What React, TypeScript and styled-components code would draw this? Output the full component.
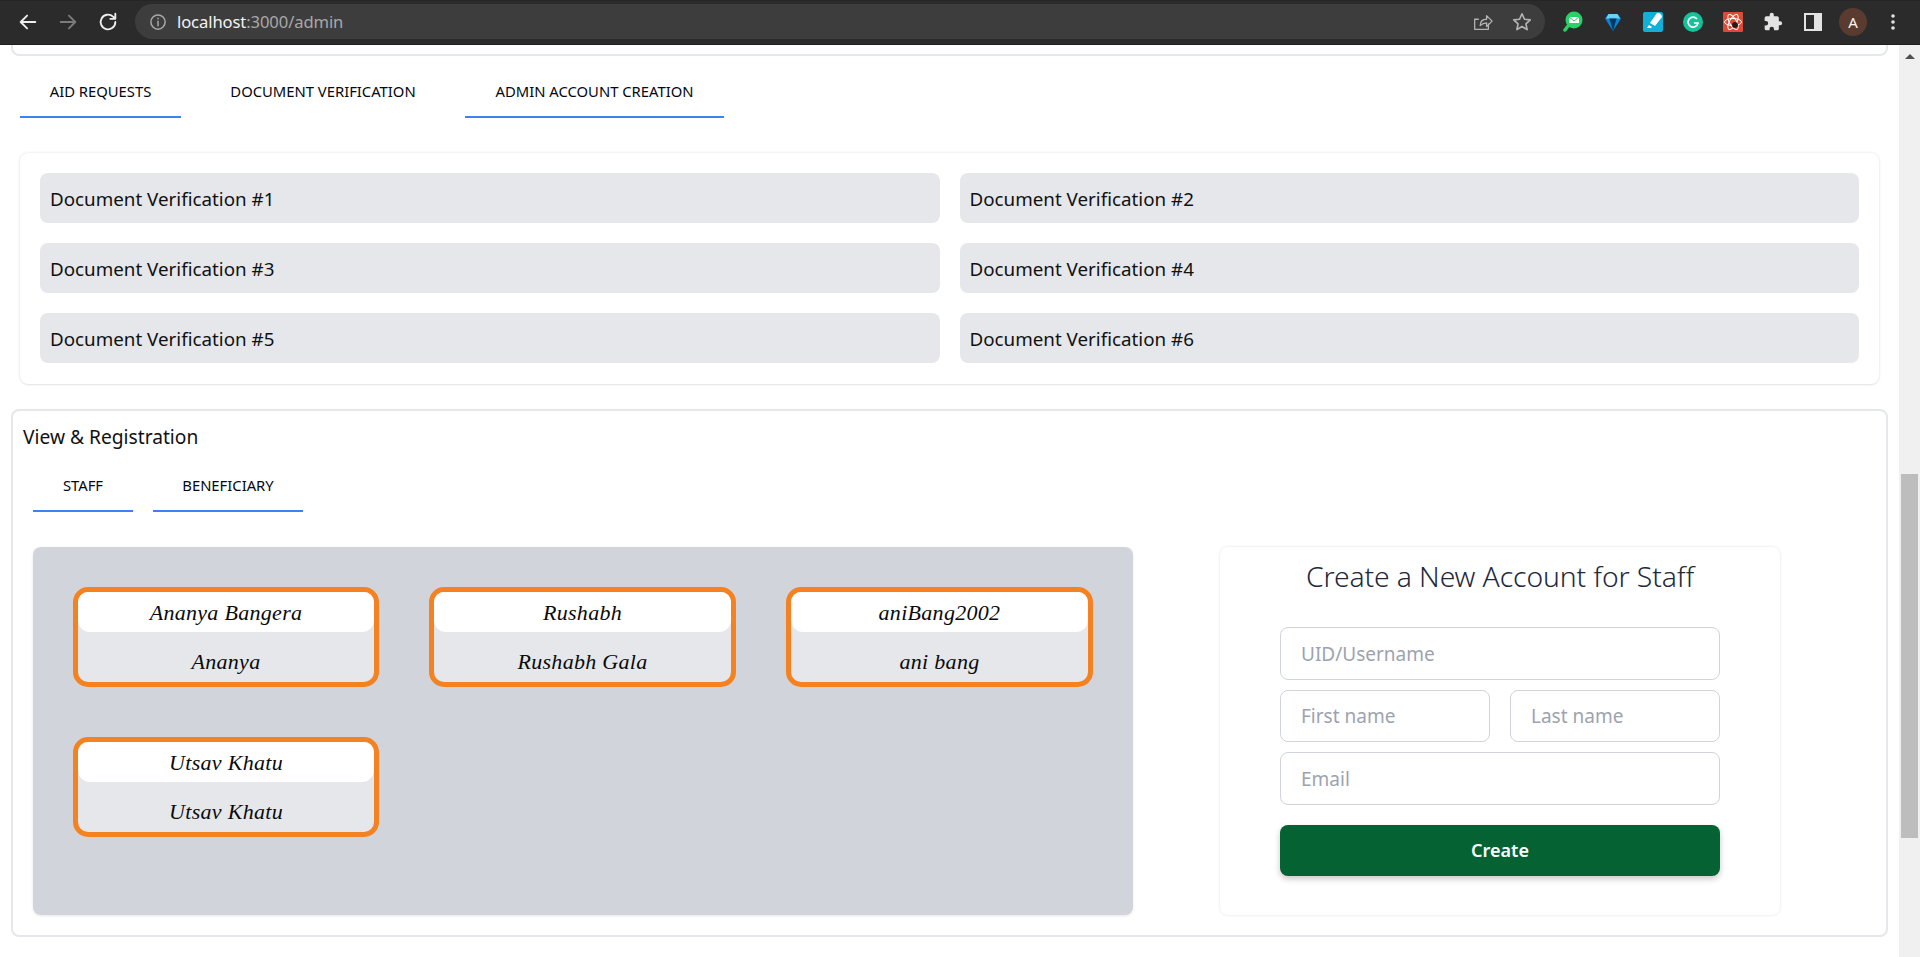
import React from "react";
import styled, { createGlobalStyle } from "styled-components";

const Global = createGlobalStyle`
  html, body { margin: 0; padding: 0; height: 100%; overflow: hidden; background: #fff; }
  * { box-sizing: border-box; }
  body { font-family: "Noto Sans", "Open Sans", sans-serif; color: #111827; }
`;

const Shell = styled.div`
  width: 1920px; height: 957px; display: flex; flex-direction: column; overflow: hidden;
`;
const Toolbar = styled.header`
  height: 45px; flex: none; background: #2b2b2b; border-bottom: 1px solid #1f1f1f;
  display: flex; align-items: center; padding: 0 0 2px 16px; border-top: 1px solid #252525;
`;
const NavButton = styled.span<{ $dim?: boolean }>`
  width: 24px; height: 24px; margin-right: 16px; display: flex; align-items: center; justify-content: center;
  color: ${(p) => (p.$dim ? "#7b7b7b" : "#eeeeee")};
`;
const Omnibox = styled.div`
  width: 1410px; height: 35px; margin: 0 0 0 -1px; background: #3d3d3d; border-radius: 18px; display: flex; align-items: center;
  padding: 0 12px 0 14px; color: #a8a8a8; flex: none;
`;
const UrlText = styled.span`
  font-family: "Noto Sans", sans-serif; font-size: 16.6px; margin-left: 10px; color: #a9a9a9; flex: 1; letter-spacing: -0.1px;
  b { font-weight: 400; color: #f2f2f2; }
`;
const OmniIcon = styled.span`
  width: 22px; height: 22px; margin-left: 18px; display: flex; align-items: center; justify-content: center; color: #b4b4b4;
`;
const ExtRow = styled.div`
  display: flex; align-items: center; margin-left: 8px;
`;
const ExtIcon = styled.span`
  width: 40px; height: 28px; display: flex; align-items: center; justify-content: center;
`;
const Avatar = styled.span`
  width: 28px; height: 28px; border-radius: 50%; background: #5a3b30; color: #f5f5f5; font-size: 15px;
  display: flex; align-items: center; justify-content: center;
`;
const Body = styled.div`
  flex: 1; display: flex; min-height: 0;
`;
const Page = styled.main`
  flex: 1; min-width: 0; padding: 0 11px 0 11px; background: #fff;
`;
const Scrollbar = styled.aside`
  width: 21px; flex: none; background: #f0f0f0; display: flex; flex-direction: column; align-items: center; padding-top: 9px;
`;
const ScrollArrow = styled.span`
  width: 0; height: 0; border-left: 5px solid transparent; border-right: 5px solid transparent; border-bottom: 5px solid #505050;
`;
const ScrollThumb = styled.span`
  width: 17px; height: 364px; background: #bdbdbd; margin-top: 415px;
`;
const TopCardEnd = styled.div`
  height: 11px; border: 2px solid #e5e7eb; border-top: none; border-radius: 0 0 8px 8px;
`;
const Tabs = styled.nav<{ $small?: boolean }>`
  display: flex; gap: ${(p) => (p.$small ? "20px" : "0")};
  margin: ${(p) => (p.$small ? "12px 0 0 10px" : "0 0 0 9px")};
  padding-top: ${(p) => (p.$small ? "0" : "11px")};
`;
const Tab = styled.div<{ $w: number; $on?: boolean; $small?: boolean }>`
  width: ${(p) => p.$w}px; height: ${(p) => (p.$small ? "50px" : "51px")};
  font-size: 14.8px; font-weight: 400; color: #030712; text-transform: uppercase; display: flex; align-items: center; justify-content: center;
  padding-bottom: ${(p) => (p.$small ? "3px" : "1px")}; border-bottom: 2px solid ${(p) => (p.$on ? "#3b82f6" : "transparent")};
`;
const DocCard = styled.section`
  margin: 35px 9px 0 9px; height: 231px; padding: 20px; border-radius: 8px; background: #fff;
  box-shadow: 0 0 3px rgba(0,0,0,.12), 0 1px 2px rgba(0,0,0,.06);
  display: grid; grid-template-columns: 1fr 1fr; gap: 20px; align-content: start;
`;
const DocItem = styled.div`
  height: 50px; background: #e5e7eb; border-radius: 8px; padding: 1px 10px 0; display: flex; align-items: center;
  font-size: 18.8px; color: #111;
`;
const Panel = styled.section`
  margin-top: 25px; height: 528px; border: 2px solid #e5e7eb; border-radius: 8px; padding: 13px 10px 0;
`;
const PanelTitle = styled.h2`
  margin: 0; font-size: 19.2px; font-weight: 400; line-height: 26px; color: #111;
`;
const PanelGrid = styled.div`
  display: flex; margin: 35px 0 0 10px; align-items: flex-start;
`;
const People = styled.div`
  width: 1100px; height: 368px; background: #d1d5db; border-radius: 8px; flex: none;
  box-shadow: 0 1px 3px rgba(0,0,0,.1);
  padding: 40px; display: grid; grid-template-columns: 306px 307px 307px; grid-auto-rows: 100px; column-gap: 50px; row-gap: 50px; align-content: start;
`;
const Person = styled.article`
  border: 5px solid #f58220; border-radius: 15px; background: #e5e7eb; overflow: hidden;
  font-family: "Liberation Serif", serif; font-style: italic; font-size: 22px; letter-spacing: 0.3px; color: #0a0a0a; text-align: center;
`;
const PersonTop = styled.div`
  height: 40px; background: #fff; border-radius: 0 0 12px 12px; display: flex; align-items: center; justify-content: center; padding-top: 1px;
`;
const PersonBottom = styled.div`
  height: 50px; display: flex; align-items: center; justify-content: center; padding-top: 10px;
`;
const FormCard = styled.form`
  width: 560px; height: 368px; margin-left: 87px; flex: none; border-radius: 8px; background: #fff;
  box-shadow: 0 0 3px rgba(0,0,0,.12);
  padding: 10px 60px 0; display: flex; flex-direction: column;
`;
const FormTitle = styled.h3`
  margin: 0 0 32px; font-size: 28.3px; font-weight: 300; line-height: 38px; text-align: center; color: #1e293b; white-space: nowrap; letter-spacing: -0.1px;
`;
const Field = styled.input`
  width: 100%; min-width: 0; height: 52.5px; border: 1px solid #d1d5db; border-radius: 8px; padding: 1px 20px 0; outline: none; background: #fff;
  font: 400 19px "Noto Sans", sans-serif;
  &::placeholder { color: #9ca3af; opacity: 1; }
`;
const FieldStack = styled.div`
  display: flex; flex-direction: column; gap: 10px;
`;
const FieldRow = styled.div`
  display: grid; grid-template-columns: 1fr 1fr; gap: 20px;
`;
const Submit = styled.button`
  height: 51px; margin-top: 20px; border: 0; border-radius: 8px; background: #056233; color: #fff;
  font: 600 18px "Noto Sans", sans-serif; box-shadow: 0 3px 6px rgba(0,0,0,.22);
`;

const Stroke = ({ size = 22, sw = 2, children }: { size?: number; sw?: number; children: React.ReactNode }) => (
  <svg width={size} height={size} viewBox="0 0 24 24" fill="none" stroke="currentColor" strokeWidth={sw} strokeLinecap="round" strokeLinejoin="round">{children}</svg>
);

const App = () => {
  const people = [["Ananya Bangera", "Ananya"], ["Rushabh", "Rushabh Gala"], ["aniBang2002", "ani bang"], ["Utsav Khatu", "Utsav Khatu"]];
  return (
    <Shell>
      <Global />
      <Toolbar>
        <NavButton><Stroke><path d="M20 12H4.5M11 5l-7 7 7 7" /></Stroke></NavButton>
        <NavButton $dim><Stroke><path d="M4 12h15.5M13 5l7 7-7 7" /></Stroke></NavButton>
        <NavButton><Stroke><path d="M20 12a8 8 0 1 1-2.5-5.8L20 8.5M20 3v5.500h-5.500" /></Stroke></NavButton>
        <Omnibox>
          <Stroke size={18}><circle cx="12" cy="12" r="9.500" /><path d="M12 11v6M12 7v.5" /></Stroke>
          <UrlText><b>localhost</b>:3000/admin</UrlText>
          <OmniIcon><Stroke size={22} sw={1.4}><path d="M19 14v6H4V9h4M10 16c0-5 3-7 7-7V5l6 6-6 6v-4c-3 0-5 1-7 3z" /></Stroke></OmniIcon>
          <OmniIcon><Stroke size={22} sw={1.8}><path d="M12 3l2.700 6 6.300.7-4.700 4.300 1.300 6.300L12 17l-5.600 3.300 1.300-6.300L3 9.700l6.300-.7z" /></Stroke></OmniIcon>
        </Omnibox>
        <ExtRow>
          <ExtIcon>
            <svg width="20" height="22" viewBox="0 0 20 22"><circle cx="11" cy="9" r="8.500" fill="#25d366"/><path d="M5 15l-3 4" stroke="#25d366" strokeWidth="3.500" strokeLinecap="round"/><path d="M6 6h10v6H6z" fill="#fff"/><path d="M6 6l5 4 5-4" fill="none" stroke="#25d366" strokeWidth="1"/></svg>
          </ExtIcon>
          <ExtIcon>
            <svg width="16" height="18" viewBox="0 0 18 20"><path d="M4 1h10l4 5-9 14L0 6z" fill="#0a84d6"/><path d="M4 1h10l3 5H1z" fill="#6cd0fb"/><path d="M9 20L5 6h8z" fill="#03385f"/></svg>
          </ExtIcon>
          <ExtIcon>
            <svg width="20" height="20" viewBox="0 0 20 20"><rect width="20" height="20" rx="2" fill="#11b0d8"/><path d="M14 1c2-1 5 2 5 4l-7 9-5-3z" fill="#fff"/><path d="M6 13l3 2-1 1H4z" fill="#fff"/></svg>
          </ExtIcon>
          <ExtIcon>
            <svg width="20" height="20" viewBox="0 0 20 20"><circle cx="10" cy="10" r="10" fill="#15c39a"/><path d="M14 7a5 5 0 1 0 1 4h-4" fill="none" stroke="#fff" strokeWidth="1.600"/></svg>
          </ExtIcon>
          <ExtIcon>
            <svg width="20" height="20" viewBox="0 0 20 20"><rect width="20" height="20" rx="1" fill="#dc4a38"/><g fill="none" stroke="#fff" strokeWidth="1"><ellipse cx="10" cy="10" rx="8.500" ry="3.500"/><ellipse cx="10" cy="10" rx="8.500" ry="3.500" transform="rotate(60 10 10)"/><ellipse cx="10" cy="10" rx="8.500" ry="3.500" transform="rotate(120 10 10)"/></g><circle cx="12" cy="13" r="3" fill="#2a1a14"/></svg>
          </ExtIcon>
          <ExtIcon>
            <svg width="20" height="20" viewBox="0 0 24 24" fill="#e3e3e3"><path d="M20.500 11H19V7a2 2 0 0 0-2-2h-4V3.500a2.500 2.500 0 0 0-5 0V5H4a2 2 0 0 0-2 2v3.800h1.500a2.700 2.700 0 0 1 0 5.400H2V20a2 2 0 0 0 2 2h3.800v-1.500a2.700 2.700 0 0 1 5.400 0V22H17a2 2 0 0 0 2-2v-4h1.500a2.500 2.500 0 0 0 0-5z"/></svg>
          </ExtIcon>
          <ExtIcon>
            <svg width="18" height="18" viewBox="0 0 18 18"><rect x="1" y="1" width="16" height="16" fill="none" stroke="#e3e3e3" strokeWidth="2"/><rect x="10" y="1" width="7" height="16" fill="#e3e3e3"/></svg>
          </ExtIcon>
          <ExtIcon><Avatar>A</Avatar></ExtIcon>
          <ExtIcon>
            <svg width="4" height="16" viewBox="0 0 4 16" fill="#e3e3e3"><circle cx="2" cy="2" r="1.800"/><circle cx="2" cy="8" r="1.800"/><circle cx="2" cy="14" r="1.800"/></svg>
          </ExtIcon>
        </ExtRow>
      </Toolbar>
      <Body>
        <Page>
          <TopCardEnd />
          <Tabs>
            <Tab $w={161} $on>Aid Requests</Tab>
            <Tab $w={284}>Document Verification</Tab>
            <Tab $w={259} $on>Admin Account Creation</Tab>
          </Tabs>
          <DocCard>
            {[1, 2, 3, 4, 5, 6].map((n) => <DocItem key={n}>Document Verification #{n}</DocItem>)}
          </DocCard>
          <Panel>
            <PanelTitle>View &amp; Registration</PanelTitle>
            <Tabs $small>
              <Tab $small $w={100} $on>Staff</Tab>
              <Tab $small $w={150} $on>Beneficiary</Tab>
            </Tabs>
            <PanelGrid>
              <People>
                {people.map(([a, b]) => (
                  <Person key={a}>
                    <PersonTop>{a}</PersonTop>
                    <PersonBottom>{b}</PersonBottom>
                  </Person>
                ))}
              </People>
              <FormCard onSubmit={(e) => e.preventDefault()}>
                <FormTitle>Create a New Account for Staff</FormTitle>
                <FieldStack>
                  <Field placeholder="UID/Username" />
                  <FieldRow>
                    <Field placeholder="First name" />
                    <Field placeholder="Last name" />
                  </FieldRow>
                  <Field placeholder="Email" />
                </FieldStack>
                <Submit type="button">Create</Submit>
              </FormCard>
            </PanelGrid>
          </Panel>
        </Page>
        <Scrollbar>
          <ScrollArrow />
          <ScrollThumb />
        </Scrollbar>
      </Body>
    </Shell>
  );
};

export default App;
